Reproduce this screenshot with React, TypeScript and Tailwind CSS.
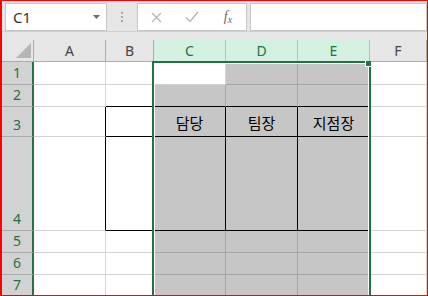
import React from "react";

const GRID = "grid grid-cols-[32px_72px_48px_72px_72px_72px_57px]";

const cols = ["A", "B", "C", "D", "E", "F"];
const selectedCols = ["C", "D", "E"];

interface RowDef {
  n: number;
  h: string;
}

const rows: RowDef[] = [
  { n: 1, h: "h-[23px]" },
  { n: 2, h: "h-[22px]" },
  { n: 3, h: "h-[30px]" },
  { n: 4, h: "h-[94px]" },
  { n: 5, h: "h-[22px]" },
  { n: 6, h: "h-[22px]" },
  { n: 7, h: "h-[22px]" },
];

const texts: Record<string, string> = {
  C3: "담당",
  D3: "팀장",
  E3: "지점장",
};

// cells with a black right / bottom edge (the small sign-off table)
const blackRight = ["A3", "A4", "B3", "B4", "C3", "C4", "D3", "D4", "E3", "E4"];
const blackBottom = ["B2", "C2", "D2", "E2", "B3", "C3", "D3", "E3", "B4", "C4", "D4", "E4"];

const cellClass = (col: string, row: number) => {
  const id = `${col}${row}`;
  const inSel = selectedCols.includes(col) && id !== "C1";
  const bg = inSel ? "bg-[#c6c6c6]" : "bg-white";
  const r = blackRight.includes(id)
    ? "border-r-black"
    : inSel
      ? "border-r-[#a6a6a6]"
      : "border-r-[#d4d4d4]";
  const b = blackBottom.includes(id)
    ? "border-b-black"
    : inSel
      ? "border-b-[#a6a6a6]"
      : "border-b-[#d4d4d4]";
  return `${bg} ${r} ${b} border-r border-b flex items-end justify-center pb-[3px]`;
};

const Toolbar = () => (
  <div className="flex h-[31px] border-b border-[#d0d0d0] bg-[#e6e6e6] pl-[3px] pt-[2px]">
    <div className="flex h-[28px] w-[102px] items-center justify-between border border-[#c6c6c6] bg-white pl-[7px] pr-[6px]">
      <span className="text-[15px] leading-none text-[#333]">C1</span>
      <svg width="7" height="4" viewBox="0 0 7 4">
        <polygon points="0,0 7,0 3.5,4" fill="#6e6e6e" />
      </svg>
    </div>
    <div className="flex w-[30px] flex-col items-center justify-center gap-[2px] pb-[1px]">
      <span className="h-[2px] w-[2px] bg-[#a8a8a8]" />
      <span className="h-[2px] w-[2px] bg-[#a8a8a8]" />
      <span className="h-[2px] w-[2px] bg-[#a8a8a8]" />
    </div>
    <div className="flex h-[28px] w-[110px] items-center border border-[#c6c6c6] bg-white">
      <span className="flex w-[36px] justify-center">
        <svg width="11" height="11" viewBox="0 0 11 11">
          <path d="M1 1 L10 10 M10 1 L1 10" stroke="#b8b8b8" strokeWidth="1.4" />
        </svg>
      </span>
      <span className="flex w-[36px] justify-center">
        <svg width="14" height="12" viewBox="0 0 14 12">
          <path d="M1 6.5 L5 10.5 L13 1" stroke="#b8b8b8" strokeWidth="1.5" fill="none" />
        </svg>
      </span>
      <span className="flex w-[36px] justify-center font-['Liberation_Serif',serif] text-[14px] italic leading-none text-[#6a6a6a]">
        f<span className="mt-[5px] text-[10px]">x</span>
      </span>
    </div>
    <div className="ml-[3px] h-[28px] w-[177px] border border-[#c6c6c6] bg-white" />
  </div>
);

const HeaderRow = () => (
  <div className={`${GRID} h-[22px]`}>
    <div className="relative border-r border-b border-[#ababab] bg-[#e6e6e6]">
      <svg className="absolute left-[14px] top-[3px]" width="16" height="16" viewBox="0 0 16 16">
        <polygon points="0,15 15,15 15,0" fill="#b5b5b5" />
      </svg>
    </div>
    {cols.map((c) => {
      const sel = selectedCols.includes(c);
      return (
        <div
          key={c}
          className={
            sel
              ? "flex items-center justify-center border-r border-b border-[#abc9b8] bg-[#d3f0e0] text-[14px] text-[#217346]"
              : "flex items-center justify-center border-r border-b border-[#ababab] bg-[#e6e6e6] text-[14px] text-[#444]"
          }
        >
          {c}
        </div>
      );
    })}
  </div>
);

export default function App() {
  return (
    <div className="h-[296px] w-[428px] overflow-hidden border-t border-r border-b border-l-2 border-[#ff0000] bg-[#e6e6e6] font-['Noto_Sans',sans-serif]">
      <Toolbar />
      <div className="h-[8px]" />
      <div className="relative">
        <HeaderRow />
        {rows.map((r) => (
          <div key={r.n} className={`${GRID} ${r.h}`}>
            <div className="flex items-end justify-center border-r-2 border-b border-r-[#217346] border-b-[#ababab] bg-[#d2d2d2] pb-[2px] text-[14px] leading-[18px] text-[#217346]">
              {r.n}
            </div>
            {cols.map((c) => (
              <div key={c} className={cellClass(c, r.n)}>
                {texts[`${c}${r.n}`] && (
                  <span className="font-['Noto_Sans_CJK_KR',sans-serif] text-[15px] leading-[20px] text-black">
                    {texts[`${c}${r.n}`]}
                  </span>
                )}
              </div>
            ))}
          </div>
        ))}
        {/* selection outline C1:E7 */}
        <div className="pointer-events-none absolute left-[150px] top-[21px] h-[300px] w-[219px] border-2 border-[#217346]">
          <div className="absolute inset-0 border border-white" />
        </div>
        {/* fill handle */}
        <div className="pointer-events-none absolute left-[363px] top-[21px] h-[6px] w-[6px] border-b border-l border-white bg-[#217346]" />
      </div>
    </div>
  );
}
